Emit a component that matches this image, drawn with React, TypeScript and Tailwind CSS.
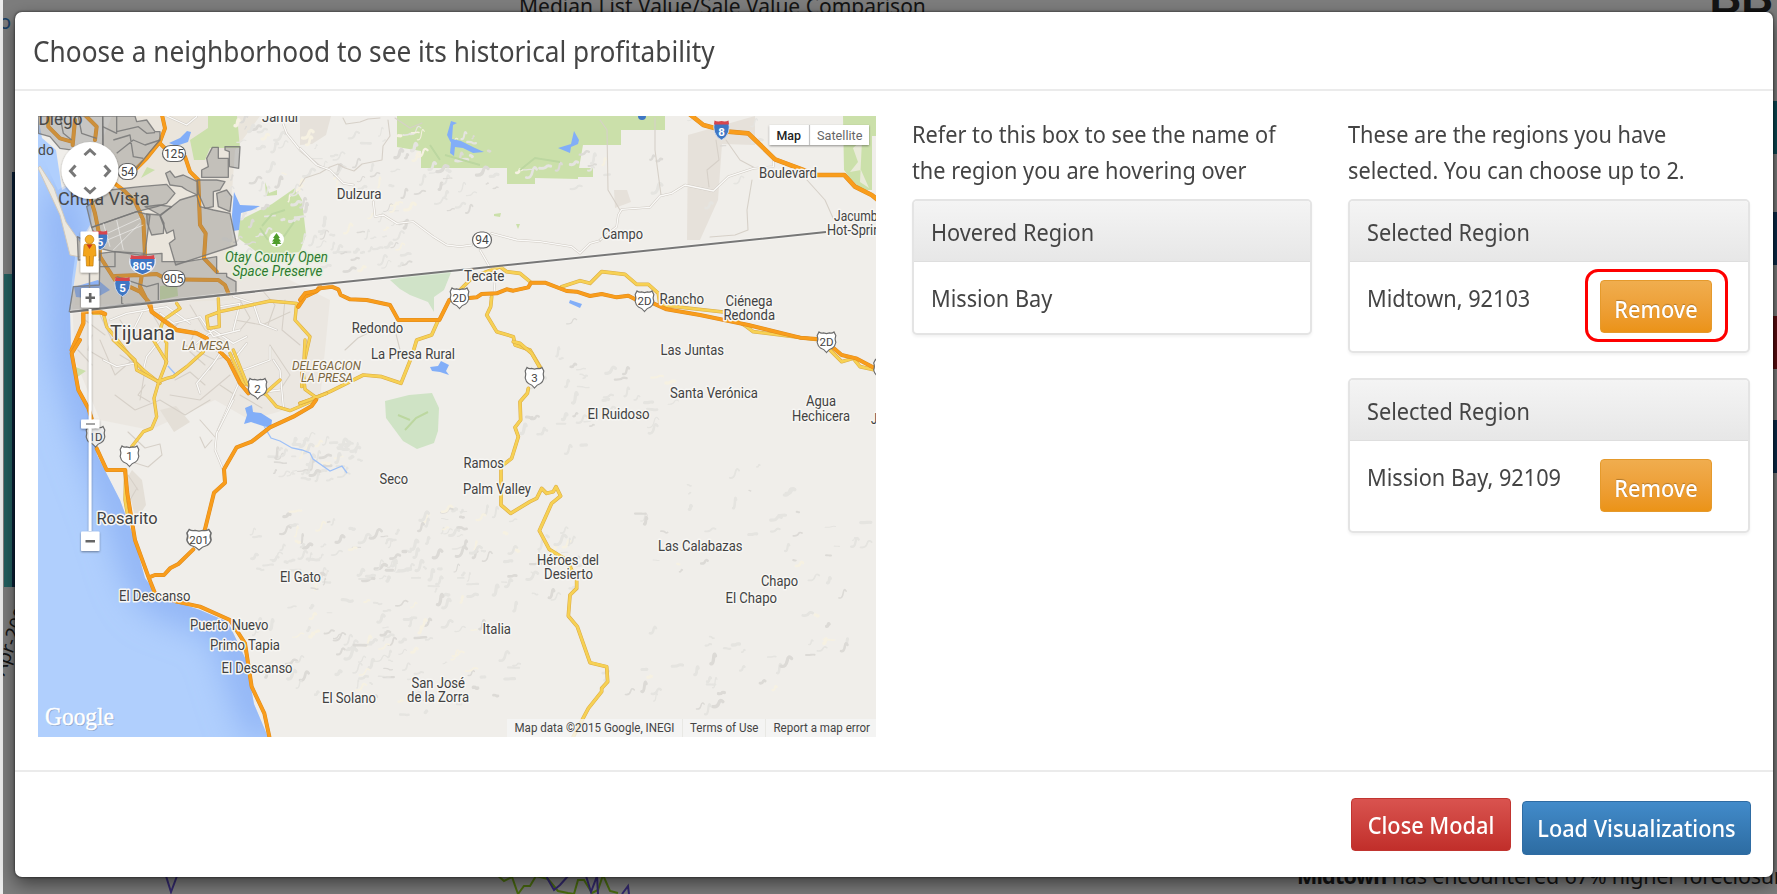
import React from "react";

type Label = [string, number, number, number, number?];

const towns: Label[] = [
  ["Dulzura", 336.7, 199.4, 44.8], ["Redondo", 351.7, 332.7, 51.5], ["Tecate", 464, 280.6, 40.5],
  ["Campo", 602, 238.6, 41], ["Boulevard", 759, 178, 58], ["Jacumba", 834, 220.5, 50],
  ["Hot-Springs", 827, 234.7, 67], ["Rancho", 659.5, 304, 44.5], ["Ciénega", 725.5, 305.5, 47],
  ["Redonda", 723.5, 319.5, 51.5], ["Las Juntas", 660.5, 355, 63.5], ["Santa Verónica", 670, 398.4, 88],
  ["Agua", 806, 406, 30], ["Hechicera", 792, 420.5, 58], ["Jacume", 871, 424, 40],
  ["El Ruidoso", 587.5, 419, 62], ["Las Calabazas", 658, 551.4, 84.5], ["Chapo", 761, 586, 37],
  ["El Chapo", 725.5, 603.4, 51.5], ["La Presa Rural", 371, 358.5, 84], ["Seco", 379.5, 483.5, 28.5],
  ["Ramos", 463.5, 468, 40.5], ["Palm Valley", 463, 494, 68], ["Héroes del", 537, 564.8, 62],
  ["Desierto", 544, 579.4, 49], ["Italia", 482.5, 634.4, 28.5], ["San José", 411.5, 688, 53.5],
  ["de la Zorra", 407, 702.4, 62], ["El Solano", 322, 702.7, 54], ["El Gato", 280, 581.5, 41],
  ["El Descanso", 119, 601, 71.5], ["Puerto Nuevo", 190, 629.5, 78.5], ["Primo Tapia", 210, 650, 70],
  ["El Descanso", 221.5, 672.5, 71], ["Jamul", 262, 121.5, 36],
  ["Rosarito", 96.5, 523.5, 61, 16.5], ["Tijuana", 110, 339.5, 65, 21],
];

function makeHills() {
  let seed = 41;
  const rnd = () => {
    seed = (seed * 16807) % 2147483647;
    return seed / 2147483647;
  };
  const clusters = [
    [420, 175, 90, 45, 60], [360, 245, 60, 30, 40], [470, 560, 120, 55, 110], [330, 640, 90, 60, 55],
    [430, 670, 90, 50, 45], [300, 550, 60, 40, 40], [560, 390, 50, 70, 26], [720, 520, 90, 60, 24],
    [700, 670, 100, 45, 30], [830, 580, 50, 90, 24], [620, 400, 60, 40, 15], [290, 140, 60, 50, 30],
    [260, 220, 50, 50, 30], [310, 460, 50, 22, 50], [680, 160, 100, 50, 12], [570, 170, 60, 20, 12],
  ];
  const out: { d: string; c: string; w: number }[] = [];
  clusters.forEach(([cx, cy, rx, ry, n]) => {
    for (let i = 0; i < n; i++) {
      const a = rnd() * 6.28;
      const r = Math.sqrt(rnd());
      const x = cx + Math.cos(a) * rx * r;
      const y = cy + Math.sin(a) * ry * r;
      const dx = 1 + rnd() * 6;
      const dy = 1 - rnd() * 7;
      out.push({
        d: `M${x.toFixed(1)} ${y.toFixed(1)}q${(dx * 0.8).toFixed(1)} ${(dy * -0.2).toFixed(1)} ${dx.toFixed(1)} ${dy.toFixed(1)}t${(dx * 0.7).toFixed(1)} ${(dy * 0.4).toFixed(1)}`,
        c: rnd() > 0.85 ? "#f6f1e2" : rnd() > 0.7 ? "#dcdad6" : "#e5e4e0",
        w: 1 + rnd() * 2.4,
      });
    }
  });
  return out;
}
const hills = makeHills();

function Road({ d, c = "#f7d154", e = "#d9ab47", w = 8 }: { d: string; c?: string; e?: string; w?: number }) {
  return (
    <>
      <path d={d} stroke={e} strokeWidth={w + 3} />
      <path d={d} stroke={c} strokeWidth={w} />
    </>
  );
}
const Highway = ({ d, w = 9 }: { d: string; w?: number }) => <Road d={d} c="#f99d1c" e="#dd8a1e" w={w} />;
const Minor = ({ d }: { d: string }) => <Road d={d} c="#fbfaf8" e="#cfcac3" w={4} />;

function Oval({ x, y, n }: { x: number; y: number; n: string }) {
  const w = n.length > 2 ? 23 : 19;
  return (
    <g>
      <rect x={x - w / 2} y={y - 8} width={w} height={16} rx={8} fill="#fff" stroke="#666" strokeWidth={1.2} />
      <text x={x} y={y + 4.3} fontSize={12} textAnchor="middle" fill="#444">{n}</text>
    </g>
  );
}
function Interstate({ x, y, n }: { x: number; y: number; n: string }) {
  const s = n.length > 2 ? 1.65 : 1;
  return (
    <g transform={`translate(${x} ${y})`}>
      <g transform={`scale(${s} 1)`}>
        <path d="M-7-8Q-8.5-3-7 2Q-5 8 0 10Q5 8 7 2Q8.500-3 7-8Q3-6.500 0-8Q-3-6.500-7-8Z" fill="#3f77c4" stroke="#e6eaf2" strokeWidth={0.8} />
        <path d="M-7-9.500Q-4-8 0-9Q4-8 7-9.500L7.500-5.500H-7.500Z" fill="#d8454d" />
      </g>
      <text y={5.5} fontSize={11.5} fontWeight={700} textAnchor="middle" fill="#fff">{n}</text>
    </g>
  );
}
function Shield({ x, y, n, dim }: { x: number; y: number; n: string; dim?: boolean }) {
  const s = n.length > 2 ? 1.3 : 1;
  return (
    <g transform={`translate(${x} ${y})`}>
      <path
        transform={`scale(${s} 1)`}
        d="M-7.500-10.500Q-5.500-8.700-3-9.600L0-8.800L3-9.600Q5.500-8.700 7.500-10.500L9.300-7Q8-4 9.300 0Q8.500 4 6 5.500Q2.500 6.500 0 10Q-2.500 6.500-6 5.500Q-8.500 4-9.300 0Q-8-4-9.300-7Z"
        fill={dim ? "#ececec" : "#fff"}
        stroke="#6b6b6b"
        strokeWidth={1.2}
      />
      <text y={3.500} fontSize={11.500} textAnchor="middle" fill="#444">{n}</text>
    </g>
  );
}

function RegionMap() {
  return (
    <svg viewBox="38 116 838 621" width="838" height="621" className="block shrink-0 font-['Roboto',sans-serif]">
      <defs>
        <filter id="soft"><feGaussianBlur stdDeviation="0.7" /></filter>
        <filter id="glow" x="-20%" y="-20%" width="140%" height="140%"><feGaussianBlur stdDeviation="18" /></filter>
        <filter id="shadow" x="-30%" y="-30%" width="160%" height="160%"><feDropShadow dx="0" dy="1" stdDeviation="1.2" floodOpacity="0.4" /></filter>
        <clipPath id="sea"><path d="M38 116L42 155L58 190L80 176L92 198L92 225L76 250L72 280L70 311L71 353L80 390L91 422L97 455L120 500L133 535L145 578L158 596L200 610L228 622L246 660L254 704L268 737H38Z" /></clipPath>
      </defs>
      <rect x="38" y="116" width="838" height="621" fill="#f0eeea" />

      {/* built-up tints and parks */}
      <path d="M70 260L240 255L330 300L320 400L250 420L215 400L150 430L100 420L75 360Z" fill="#ebe7e1" />
      <path d="M132 470L142 480L146 505L136 520L126 480ZM160 410L176 406L190 422L174 432Z" fill="#e4dfd7" />
      <path d="M300 116H331L326 135L312 144L300 145ZM688 135L755 116V145L722 144L718 200L700 240H687ZM614 190H627L631 202L615 208Z" fill="#e6e1da" />
      <path d="M112 116H260L235 150L230 220L240 300L75 305V245L92 230L90 170Z" fill="#eae5dc" />
      <g fill="#cbe0aa">
        <path d="M397 116H665V130H621V145H583L579 168H593V177H578V179L535 178V184H507V168H421V151L397 147Z" />
        <path d="M843 116H876V136H872V190H862L850 178L844 170Z" />
        <path d="M190 140L208 128V116H237L240 148L210 148L205 160H194Z" />
        <path d="M240 220L272 204L295 188L302 200L306 235L300 252L262 256L238 238Z" />
        <path d="M265 182L269 193L277 190V195L266 196ZM147 167L155 170L141 178ZM160 286L177 284L178 296L160 300ZM73 366L86 371L76 378ZM494 214L501 213L500 217L494 216ZM516 224L520 224L518 229Z" />
        <path d="M862 140L853 148L858 162L850 172L861 170L869 188L860 182Z" fill="#e9ead9" />
      </g>
      <path d="M390 280L413 275L452 270L444 290L434 297L434 312L428 302L410 295L400 289Z" fill="#d0e3c8" />
      <path d="M385 401L409 395L432 393L439 408L438 431L434 443L417 449L403 441L386 418Z" fill="#cfe3c5" />
      <g filter="url(#soft)" fill="none" strokeLinecap="round">
        {hills.map((h, i) => <path key={i} d={h.d} stroke={h.c} strokeWidth={h.w} />)}
      </g>
      <g filter="url(#soft)" fill="none" stroke="#bcd7a0" strokeWidth="2">
        <path d="M262 226L272 214L285 210M278 245L294 222M268 240L260 228M520 170L535 158L560 162M440 160L430 145M405 430L416 418L428 412M398 415L410 420M445 155L480 165" />
      </g>

      {/* ocean and lakes */}
      <path d="M38 116L42 138L56 150L62 190L80 180L92 200L90 225L76 248L78 256L70 311L71 353L80 390L91 422L97 455L120 500L133 535L145 578L158 596L200 610L228 622L246 660L254 704L268 737H38Z" fill="#b0cffd" />
      <g clipPath="url(#sea)">
        <path d="M62 190L70 311L71 353L91 422L120 500L145 578L158 596L228 622L254 704L268 737" fill="none" stroke="#86acf3" strokeWidth="30" filter="url(#glow)" />
      </g>
      <path d="M38 168L60 215L70 255L80 257L82 245L66 222L54 188L40 166Z" fill="#ece8df" stroke="#d1c9bc" strokeWidth="1" />
      <path d="M74 287L98 280L110 290L94 299L76 297Z" fill="#8db2f5" />
      <g fill="#82aef8">
        <path d="M169 143L180 138L187 131L191 132L188 142L176 146Z" />
        <path d="M234 192L240 205L260 206L252 210L241 213L239 230L233 231L232 215Z" />
        <path d="M451 121L457 123L453 125L452 139L461 141L475 148L484 152L473 153L463 148L455 147L454 156L450 153L451 143L447 135Z" />
        <path d="M558 148L571 144L574 131L579 140L578 144L571 147L570 153Z" />
        <path d="M570 300L582 304L580 308L569 303Z" />
        <path d="M430 367L438 366L441 361L449 365L446 371L449 375L440 372L432 371Z" />
        <path d="M245 408L252 405L253 412L261 413L272 420L271 428L263 426L251 422L244 424L247 415Z" />
      </g>
      <path d="M264 426L271 438L280 441L292 448L302 450L310 453L313 459L330 471L342 466L347 473M168 366L176 375" fill="none" stroke="#9dc0f8" strokeWidth="1.300" />

      <g fill="none" strokeLinecap="round" strokeLinejoin="round">
        {/* quiet local streets */}
        <g stroke="#d6d0c8" strokeWidth="1.100">
          <path d="M115 395L135 410L160 400L185 415L210 400M120 355L145 370L140 400M100 340L115 375L130 362M190 305L205 330L225 342L210 370M235 320L262 325L290 312M185 345L215 360L240 352M230 375L200 400L170 395M128 432L145 448L160 444L162 455L148 467L132 462M200 420L215 437M100 315L112 340M85 320L105 335M78 350L92 365M240 395L262 408M145 385L138 395L150 402M270 345L290 375L280 390" />
          <path d="M120 320L132 338L150 330M150 310L165 335L180 322M195 330L188 350L205 365M240 300L250 318L240 330M262 290L275 305L268 325M285 300L282 330L300 345M175 380L190 372L205 385M220 385L235 395L228 408M92 335L88 350L105 360M200 437L205 448L212 440M128 475L138 490M130 500L137 488" />
          <path d="M343 118L346 124L360 122L368 119L380 118M388 120L390 136L383 146L382 160L362 164L354 171L345 168L338 164L330 167L320 173L305 178L300 186M600 120L607 130L608 190L620 210M655 118L655 150L661 195M716 140L719 160L707 170L709 187M726 140L740 160L755 168M752 180L747 210L748 230L735 235L710 237M807 180L825 200L833 218M345 350L358 338L378 328L395 330L400 350M395 118L410 128L422 123" />
        </g>
        <g transform="translate(0 90) scale(.33333)">
          <Minor d="M330 690L380 670L440 660L500 650L570 700M480 670L520 700L600 680L640 740L720 720M700 620L760 640L780 700L830 720M660 650L720 640L700 720M400 720L430 660M590 760L640 720L700 760L740 740" />
          <Minor d="M500 78L560 105L590 80M845 90L860 130L900 180L960 230M960 100" />
        </g>
        <g transform="translate(0 340) scale(.33333)">
          <Minor d="M310 60L350 80L400 70L430 90L440 50L480 0M600 160L590 130L640 70L660 40M630 20L700 60L740 10M820 60L840 90L850 200M720 120L650 280L645 330L670 390M810 20V60L730 90" />
          <Minor d="M700 180L655 270M760 160L840 150" />
        </g>
        <g transform="translate(300 90) scale(.33333)">
          <Minor d="M0 175L50 225L90 240L130 280L160 285M220 335L225 380L250 375L290 400L340 395L400 440L440 465L480 470L515 465M575 430L650 450L720 455L815 470L840 490L870 460L900 452M540 480L580 550L585 610L570 620" />
        </g>
        <g transform="translate(600 90) scale(.33333)">
          <Minor d="M0 450L50 410L55 375L65 358L150 352L180 318L215 310L255 285L340 303L385 260L460 235L520 230V210" />
        </g>

        <g transform="translate(0 90) scale(.33333)">
          <Road d="M530 640L540 655L490 690L480 720L500 760L498 820M655 625L658 710L625 715L620 680L660 665L810 633L890 640L885 690L930 740L905 850L905 890M280 670L310 670L320 710L400 810L430 840L480 880M840 870L800 905L730 880L690 790" w={7} />
        </g>
        <g transform="translate(0 340) scale(.33333)">
          <Road d="M340 0L405 60L410 90L475 125L500 115L520 110L560 80L610 35M460 0L500 65L475 130L462 175L470 230L455 265L430 275L395 320M377 390L375 480L385 540M700 30L740 130L800 165L830 200L870 212L950 178" w={7} />
        </g>
        <g transform="translate(300 90) scale(.33333)">
          <Road d="M415 690L395 735L350 750L335 800L303 880L245 860L190 855L90 905L30 930L0 940M480 600L520 560L600 530L620 545L660 550L690 575M575 620L572 650L560 675L590 725L640 740L645 765L690 780L720 830M785 590L840 572L870 580L905 545L975 553L1010 583L1045 583L1075 610L1080 645L1270 666L1340 710L1360 725L1560 750M1580 770L1625 815L1660 805L1680 830L1725 840" />
        </g>
        <g transform="translate(300 340) scale(.33333)">
          <Road d="M640 5L660 10L695 40L718 80M685 145L682 160L660 185L662 240L645 262L655 290L635 355L603 380V495L632 520L690 485L710 475L725 445L740 460L760 455L768 440L782 468L755 490L718 572L748 628L800 660L830 720V745L810 765L805 828L832 860L870 968L920 980L923 1025L905 1045V1055L865 1105L820 1190" />
          <Road d="M0 190L48 172L15 148L10 100L15 0M48 172L80 160" w={7} />
        </g>

        <g transform="translate(0 90) scale(.33333)">
          <Highway d="M485 70L495 115L480 155L440 205L400 245M480 160L500 180L555 200L570 245L595 270L600 405L617 430L612 505L650 545M145 75V110L180 145L215 155M225 90L218 165M255 75L290 110L285 150M330 270L370 300L405 335L430 390L435 495L420 590L450 650M270 320L285 370L297 430L300 500L345 570L420 605L450 640M345 558L420 555L470 552L500 568L655 570L675 585L685 610" w={9} />
          <Highway d="M215 780L250 700V665L300 665L315 672M450 640L455 665L530 720L590 730L620 745M895 650L915 620L950 603L960 590" w={10} />
        </g>
        <g transform="translate(0 340) scale(.33333)">
          <Highway d="M240 0L215 40L235 150L265 205L275 235M290 325L320 390H375L382 460L405 600L447 715L465 760L530 785L600 800L690 840L735 910L755 1040L793 1120L808 1190M447 712L465 705H492L510 685L535 672L580 628M612 580L642 458L675 428L672 388L710 322L755 305L810 262L880 230L935 198L948 180M660 35L685 60L720 130L745 160" w={9} />
        </g>
        <g transform="translate(300 90) scale(.33333)">
          <Highway d="M0 630L15 610L50 603L60 595L95 590L115 598L122 615L150 628L200 630L270 645L295 690H418L448 630L530 622L545 612L590 610L620 598L640 602L685 592L693 578H735L800 603L830 605L870 618L905 612L950 622L985 617L1010 630L1060 640L1100 658L1200 675L1345 705L1500 743L1560 748L1590 765L1625 795L1668 805L1725 835" w={9} />
        </g>
        <g transform="translate(600 90) scale(.33333)">
          <Highway d="M272 75L310 105L385 125L445 130L525 208L650 255H733L765 290L815 315L840 335" w={11} />
        </g>
      </g>

      {/* selectable zip-code regions */}
      <g transform="translate(0 90) scale(.33333)" fill="#777" fillOpacity="0.34" stroke="#777" strokeOpacity="0.85" strokeWidth="4" strokeLinejoin="round">
        <path d="M114 78H308V180L285 190L180 175L150 140L115 130Z" />
        <path d="M308 78H405L410 95L440 90L465 125H480V150L450 185L410 235L350 240L310 180Z" />
        <path d="M308 110L350 130V75M350 125L415 110L440 130L465 128M340 150L390 135L400 200L430 205M350 190L400 150L435 165L480 150M180 80L190 130L215 150M235 80L245 130L290 145" fill="none" />
        <path d="M260 350L330 300L420 290L500 283L525 310L500 340L470 350L410 365L275 412Z" />
        <path d="M275 412L410 365L450 375L435 490L340 485L300 475L285 440Z" />
        <path d="M440 372L480 375L492 400L490 430L455 435L442 400ZM435 350L478 345L515 350L480 375Z" />
        <path d="M590 315L540 330L480 378L500 430L520 420L525 447L508 460L527 525L710 465L690 370L640 360L600 350Z" />
        <path d="M497 250L510 243L525 262L550 255L592 275V315L560 300L545 290L510 285ZM592 270H650L675 275L660 300L640 305V350L615 355L595 310ZM650 310L680 300L695 320L690 365L655 350Z" />
        <path d="M605 240L625 230L620 205L637 172H655V205H685V262H605ZM675 170H720L716 235L688 230V185L675 180Z" />
        <path d="M300 490L345 485L420 495L486 490V515H560L650 500V550H680V560L708 575V610L390 642L208 665L220 590L298 585Z" />
        <path d="M350 560L440 590L475 580V630M365 600V640L380 648M345 485V530H300" fill="none" />
        <path d="M232 440L300 475V510H235Z" />
        <path d="M300 440L420 385M310 455L430 405M340 480L420 400M350 390L370 480M310 400L330 470" fill="none" stroke="#fff" strokeOpacity=".5" strokeWidth="3" />
      </g>
      <path d="M70 312L300 286.500L470 269L826 232L834 231" fill="none" stroke="#fff" strokeWidth="4" opacity=".35" />
      <path d="M70 312L300 286.500L470 269L826 232" fill="none" stroke="#777" strokeWidth="2" />

      {/* route markers */}
      <Oval x={174} y={153.500} n="125" /><Oval x={127.500} y={171.500} n="54" /><Oval x={482} y={240} n="94" /><Oval x={173.500} y={278.500} n="905" />
      <Interstate x={100} y={240} n="5" /><Interstate x={142.500} y={264.500} n="805" /><Interstate x={122.500} y={286.500} n="5" /><Interstate x={721.500} y={130} n="8" />
      <Shield x={459.500} y={298.500} n="2D" /><Shield x={644.500} y={301.500} n="2D" /><Shield x={826.500} y={342.500} n="2D" />
      <Shield x={95.500} y={437} n="1D" dim /><Shield x={129.500} y={456.500} n="1" /><Shield x={257.500} y={389} n="2" />
      <Shield x={199} y={540} n="201" /><Shield x={534.500} y={378} n="3" /><Shield x={883} y={370} n="" />
      <circle cx="276.500" cy="239.500" r="7.500" fill="#fff" />
      <path d="M276.500 233L280 238H278.500L281 241.500H279L281.500 244H277.300V246H275.700V244H271.500L274 241.500H272L274.500 238H273Z" fill="#4f9d2c" />
      <path d="M638 116A4 4 0 0 0 646 116Z" fill="#3f77c4" />

      {/* place names */}
      <g fill="#424242" stroke="#f7f6f3" strokeWidth="3" strokeLinejoin="round" paintOrder="stroke">
        {towns.map(([t, x, y, w, s], i) => (
          <text key={i} x={x} y={y} fontSize={s ?? 14} textLength={w} lengthAdjust="spacingAndGlyphs">{t}</text>
        ))}
        <g fontStyle="italic" fontSize="12.500">
          <text x="182" y="349.500" textLength="48" lengthAdjust="spacingAndGlyphs" fill="#7b6640">LA MESA</text>
          <text x="292" y="369.500" textLength="69" lengthAdjust="spacingAndGlyphs" fill="#7b6640">DELEGACION</text>
          <text x="301" y="381.500" textLength="52" lengthAdjust="spacingAndGlyphs" fill="#7b6640">LA PRESA</text>
        </g>
        <g fontStyle="italic" fontSize="14" fill="#2c7a2f" stroke="#e8f0de">
          <text x="225" y="261.500" textLength="103" lengthAdjust="spacingAndGlyphs">Otay County Open</text>
          <text x="232.500" y="275.500" textLength="90" lengthAdjust="spacingAndGlyphs">Space Preserve</text>
        </g>
      </g>
      <g fill="#4a4a4a">
        <text x="38.500" y="124.500" fontSize="18" textLength="44" lengthAdjust="spacingAndGlyphs">Diego</text>
        <text x="38" y="155" fontSize="14">do</text>
        <text x="58" y="204.500" fontSize="18" textLength="91.500" lengthAdjust="spacingAndGlyphs">Chula Vista</text>
      </g>

      {/* pan, street view and zoom controls */}
      <g filter="url(#shadow)">
        <circle cx="90" cy="170.500" r="28.500" fill="#fff" />
        <rect x="80.500" y="231.500" width="18" height="41" rx="1" fill="#fff" />
        <rect x="88.700" y="309" width="2.800" height="222" fill="#fff" />
        <rect x="81" y="288" width="18.500" height="19.500" rx="1" fill="#fff" />
        <rect x="81" y="531.500" width="18.500" height="19.500" rx="1" fill="#fff" />
        <rect x="81" y="419.500" width="18.500" height="9" rx="1" fill="#fff" />
      </g>
      <path d="M84.500 155L90 150L95.500 155M84.500 187.500L90 192.500L95.500 187.500M75.500 165.500L70.500 171L75.500 176.500M104.500 165.500L109.500 171L104.500 176.500" fill="none" stroke="#777" strokeWidth="3" />
      <path d="M85.500 297.700H95M90.200 293V302.500M85.500 541.300H95" stroke="#666" strokeWidth="2.600" />
      <path d="M86 424H95" stroke="#888" strokeWidth="1.500" />
      <path d="M89.500 273V288" stroke="#888" strokeWidth="1.500" />
      <path d="M84 246Q84 244 86 244H93Q95.500 244 95.500 246.500L96 256H93.500L93 266H86.500L86 256H83.300Z" fill="#f3a51c" stroke="#c47f0f" strokeWidth=".7" />
      <circle cx="89.500" cy="239.500" r="4.300" fill="#f5b12a" stroke="#c47f0f" strokeWidth=".7" />
      <path d="M86.500 244.500L89.500 249L92.500 244.500Z" fill="#c8371d" />
      <path d="M89.500 256V266" stroke="#c47f0f" strokeWidth=".8" />
      <g filter="url(#shadow)"><rect x="769.500" y="125" width="99.500" height="20" fill="#fff" /></g>
      <path d="M809.500 125V145" stroke="#c4c4c4" strokeWidth="1.200" />
      <text x="776.500" y="140" fontSize="13.500" fontWeight="500" fill="#222" textLength="24.500" lengthAdjust="spacingAndGlyphs">Map</text>
      <text x="817" y="140" fontSize="13.500" fill="#666" textLength="45.500" lengthAdjust="spacingAndGlyphs">Satellite</text>

      <rect x="507" y="719" width="369" height="18" fill="#f5f5f5" opacity=".8" />
      <path d="M682.500 719V737M765.500 719V737" stroke="#e8e8e4" />
      <g fill="#444" fontSize="12.500">
        <text x="514.500" y="732.300" textLength="160" lengthAdjust="spacingAndGlyphs">Map data ©2015 Google, INEGI</text>
        <text x="690" y="732.300" textLength="68.500" lengthAdjust="spacingAndGlyphs">Terms of Use</text>
        <text x="773.500" y="732.300" textLength="96.500" lengthAdjust="spacingAndGlyphs">Report a map error</text>
      </g>
      <text x="46" y="726" fontSize="25" className="font-['Liberation_Serif',serif]" fill="#8fa9cf" textLength="69" lengthAdjust="spacingAndGlyphs">Google</text>
      <text x="45" y="725" fontSize="25" className="font-['Liberation_Serif',serif]" fill="#fff" stroke="#fff" strokeWidth=".4" textLength="69" lengthAdjust="spacingAndGlyphs">Google</text>
    </svg>
  );
}

const narrow = "block w-fit origin-left scale-x-[0.905] whitespace-nowrap";
const narrowCentered = "flex h-full items-center justify-center scale-x-[0.905] whitespace-nowrap";

function Panel({ title, className, children }: { title: string; className: string; children: React.ReactNode }) {
  return (
    <section className={`overflow-hidden rounded-[5px] border-2 border-[#e4e4e4] bg-white shadow-[0_2px_3px_rgba(0,0,0,0.05)] ${className}`}>
      <h3 className="flex h-[61px] items-center border-b border-[#dedede] bg-linear-to-b from-[#f4f4f4] to-[#e7e7e7] px-[17px] pt-0.5">
        <span className={narrow}>{title}</span>
      </h3>
      {children}
    </section>
  );
}

function SelectedRegion({ name, className, marked }: { name: string; className: string; marked?: boolean }) {
  return (
    <Panel title="Selected Region" className={className}>
      <div className="flex justify-between pt-[18px] pr-9 pl-[17px]">
        <div className="w-0"><span className={narrow}>{name}</span></div>
        <div className="relative">
          <button className="block h-[53px] w-[112px] rounded-[4px] border border-[#e59a2c] bg-linear-to-b from-[#f0ad4e] to-[#eb9316] pt-1 font-medium text-white [text-shadow:0_-1px_1px_rgba(0,0,0,0.25)]">
            <span className={narrowCentered}>Remove</span>
          </button>
          {marked && <span className="absolute -top-[11px] -left-[15px] h-[73px] w-[143px] rounded-[13px] border-3 border-[#fe0000]" />}
        </div>
      </div>
    </Panel>
  );
}

function Dashboard() {
  return (
    <div className="flex h-full text-[#141414]">
      <div className="w-[3px] bg-[#ededed]" />
      <div className="flex w-3 flex-col overflow-hidden">
        <span className="-ml-1 pt-2.5 text-[20px] leading-6 text-[#173f66]">o</span>
        <div className="mt-[138px] flex h-[415px] items-end">
          <span className="ml-px h-[313px] w-2 bg-[#236060]" />
          <span className="h-full w-[3px] bg-[#0a2038]" />
        </div>
        <span className="mt-[37px] -ml-[32px] self-start -rotate-70 text-[19px] leading-6 whitespace-nowrap">Apr-2009</span>
      </div>
      <div className="flex w-0 grow flex-col justify-between">
        <div className="flex h-3 items-end justify-between overflow-hidden pl-[504px] whitespace-nowrap">
          <span className="h-[19px] text-[21px] leading-[27px]">Median List Value/Sale Value Comparison</span>
          <span className="h-[48px] font-['Liberation_Sans',sans-serif] text-[44px] leading-[68px] font-bold">BB</span>
        </div>
        <div className="flex h-[54px]">
          <svg className="w-[1282px] shrink-0" viewBox="15 0 1282 54" fill="none" strokeWidth="2">
            <path d="M496 34L504 41L512 37L518 54L524 46L530 46L536 36L548 39L558 51L568 53L574 54L578 40H584L592 53L598 50L603 35L610 51L618 53" stroke="#4b6d10" />
            <path d="M166 36L171 52L177 36M546 36L554 50L560 45L568 36M586 36L591 52L597 36L598 54M622 54L628 46L629 54" stroke="#352a70" />
          </svg>
          <p className="pt-[20px] text-[21.500px] leading-[32px] tracking-[-0.2px] whitespace-nowrap"><b className="tracking-[-0.8px]">Midtown</b> has encountered 67% higher foreclosure</p>
        </div>
      </div>
      <div className="flex w-1 flex-col gap-[51px] pt-[101px]">
        <span className="mb-[7px] h-[53px] bg-[#0c4854]" />
        <span className="h-[53px] bg-[#0c2b4a]" />
        <span className="h-[53px] bg-[#5d0d10]" />
        <span className="h-[53px] bg-[#0c2b4a]" />
      </div>
    </div>
  );
}

export default function App() {
  return (
    <div className="relative h-[894px] w-full overflow-hidden bg-[#7d7d7d] font-['Noto_Sans',sans-serif] text-[24px] leading-9 text-[#444]">
      <Dashboard />
      <div className="absolute inset-0 flex pt-3 pr-1 pb-[17px] pl-[15px]">
        <div className="flex grow flex-col rounded-[7px] bg-white shadow-[0_7px_18px_rgba(0,0,0,0.5),0_0_2px_1px_rgba(0,0,0,0.35)]">
          <header className="flex h-[79px] items-center border-b-2 border-[#ebebeb] px-[18px] pt-px">
            <h2 className="origin-left scale-x-[0.92] text-[28.5px] whitespace-nowrap">Choose a neighborhood to see its historical profitability</h2>
          </header>
          <main className="flex h-[679px] gap-9 pt-[25px] pl-[23px]">
            <RegionMap />
            <div className="w-[400px] shrink-0">
              <p className={`h-[71px] leading-[35.500px] ${narrow}`}>Refer to this box to see the name of<br />the region you are hovering over</p>
              <Panel title="Hovered Region" className="mt-3 h-[136px]">
                <div className="px-[17px] pt-[18px]"><span className={narrow}>Mission Bay</span></div>
              </Panel>
            </div>
            <div className="w-[402px] shrink-0">
              <p className={`h-[71px] leading-[35.500px] ${narrow}`}>These are the regions you have<br />selected. You can choose up to 2.</p>
              <SelectedRegion name="Midtown, 92103" className="mt-3 h-[154px]" marked />
              <SelectedRegion name="Mission Bay, 92109" className="mt-[25px] h-[155px]" />
            </div>
          </main>
          <footer className="flex items-start justify-end gap-[11px] border-t-2 border-[#ebebeb] pt-[26px] pr-[22px] font-medium text-white [text-shadow:0_-1px_1px_rgba(0,0,0,0.25)]">
            <button className="h-[53px] w-[160px] rounded-[4px] border border-[#c13530] bg-linear-to-b from-[#d9534f] to-[#c12e2a]">
              <span className={narrowCentered}>Close Modal</span>
            </button>
            <button className="mt-[3px] h-[54px] w-[229px] rounded-[4px] border border-[#2f6ca3] bg-linear-to-b from-[#428bca] to-[#2d6ca2]">
              <span className={narrowCentered}>Load Visualizations</span>
            </button>
          </footer>
        </div>
      </div>
    </div>
  );
}
